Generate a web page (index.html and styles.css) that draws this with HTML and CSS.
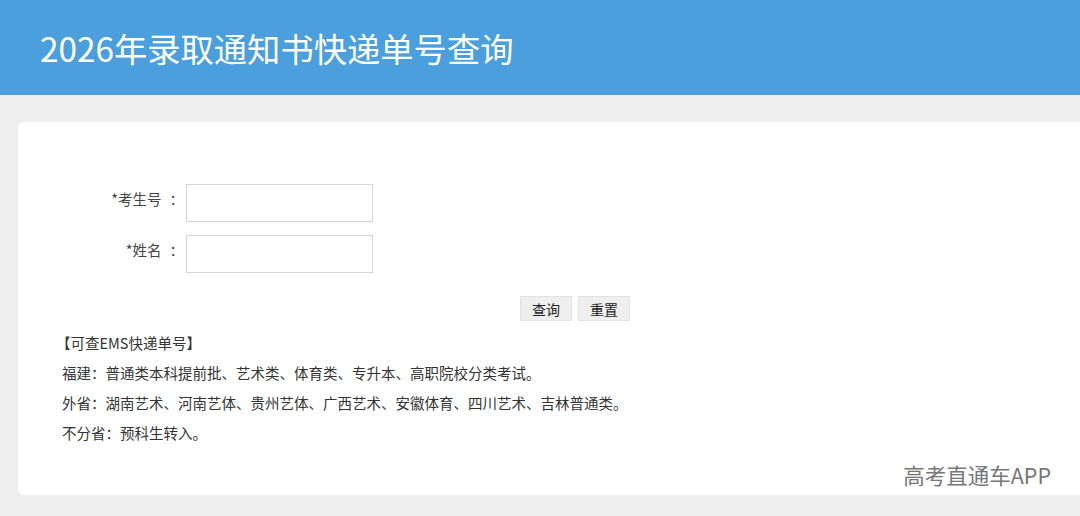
FILE: index.html
```html
<!DOCTYPE html>
<html lang="zh-CN">
<head>
  <meta charset="UTF-8">
  <title>2026年录取通知书快递单号查询</title>
  <link rel="stylesheet" href="styles.css">
</head>
<body>
  <header class="top-bar">
    <h1>2026年录取通知书快递单号查询</h1>
  </header>

  <main class="panel">
    <form class="query-form">
      <div class="form-row">
        <label class="form-label">*考生号<span class="colon">：</span></label>
        <input type="text" class="form-input">
      </div>
      <div class="form-row">
        <label class="form-label">*姓名<span class="colon">：</span></label>
        <input type="text" class="form-input">
      </div>
      <div class="form-actions">
        <button type="button" class="btn">查询</button>
        <button type="reset" class="btn">重置</button>
      </div>
    </form>

    <div class="notes">
      <p class="notes-title">【可查EMS快递单号】</p>
      <p>福建：普通类本科提前批、艺术类、体育类、专升本、高职院校分类考试。</p>
      <p>外省：湖南艺术、河南艺体、贵州艺体、广西艺术、安徽体育、四川艺术、吉林普通类。</p>
      <p>不分省：预科生转入。</p>
    </div>

    <div class="watermark">高考直通车APP</div>
  </main>
</body>
</html>
```

FILE: styles.css
```css
body {
  margin: 0;
  padding: 0;
  background-color: #eeeeee;
  font-family: "Noto Sans CJK SC", "Liberation Sans", sans-serif;
  color: #333;
  height: 516px;
  overflow: hidden;
}

.top-bar {
  background-color: #4a9fdc;
  height: 95px;
  display: flex;
  align-items: center;
  padding-left: 40px;
}

.top-bar h1 {
  margin: 0;
  font-size: 33.3px;
  font-weight: normal;
  color: #ffffff;
}

.panel {
  position: relative;
  background-color: #ffffff;
  margin: 27px 0 0 18px;
  height: 373px;
  border-radius: 6px 0 0 6px;
  padding-top: 62px;
  box-sizing: border-box;
}

.query-form {
  width: 612px;
}

.form-row {
  display: flex;
  align-items: flex-start;
  margin-bottom: 13px;
}

.form-label {
  width: 166px;
  text-align: right;
  padding-right: 2px;
  padding-top: 4px;
  font-size: 14.5px;
  line-height: 22px;
  color: #444;
}

.form-label .colon {
  margin-left: 8px;
}

.form-input {
  width: 187px;
  height: 38px;
  box-sizing: border-box;
  border: 1px solid #d4d4d4;
  margin: 0;
  padding: 0 6px;
}

.form-actions {
  display: flex;
  justify-content: flex-end;
  gap: 6px;
  margin-top: 11px;
  padding-top: 10px;
}

.btn {
  width: 52px;
  height: 25px;
  border: 1px solid #e2e2e2;
  background-color: #efefef;
  font-family: "Noto Sans CJK SC", sans-serif;
  font-size: 14px;
  color: #222;
  padding: 0;
}

.notes {
  padding-left: 44px;
  margin-top: 7px;
  font-size: 14.5px;
  color: #333;
}

.notes p {
  margin: 0;
  line-height: 30px;
}

.notes-title {
  margin-left: -6px !important;
}

.watermark {
  position: absolute;
  right: 29px;
  bottom: 5px;
  font-size: 21.5px;
  color: #777;
}
```
